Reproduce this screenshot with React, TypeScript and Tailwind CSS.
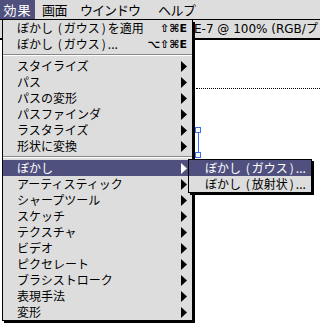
import React from 'react';

const jp = { fontFamily: '"Noto Sans CJK JP", "Noto Sans", sans-serif' };

function Arrow({ white }: { white?: boolean }) {
  return (
    <svg width="6" height="11" viewBox="0 0 6 11" className="shrink-0">
      <polygon points="0,0 6,5.5 0,11" fill={white ? '#fff' : '#000'} />
    </svg>
  );
}

// Osaka's half-width parentheses are wider than Noto's, so pad them a little
function Label({ text }: { text: string }) {
  const parts = text.split(/([()])/);
  return (
    <span className="whitespace-pre">
      {parts.map((p, i) =>
        p === '(' || p === ')' ? (
          <span key={i} className="px-[2px]">
            {p}
          </span>
        ) : (
          <React.Fragment key={i}>{p}</React.Fragment>
        )
      )}
    </span>
  );
}

function Row({ label, sub, active, shortcut }: { label: string; sub?: boolean; active?: boolean; shortcut?: string }) {
  return (
    <div
      className={`h-[16px] flex items-center justify-between pl-[14px] pr-[5px] text-[12px] leading-none ${
        active ? 'bg-[#50507f] text-white' : 'text-black'
      }`}
    >
      <Label text={label} />
      {sub && <Arrow white={active} />}
      {shortcut && (
        <span className="text-[11px] font-bold" style={{ fontFamily: '"DejaVu Sans", sans-serif' }}>
          {shortcut}
        </span>
      )}
    </div>
  );
}

function Sep() {
  return (
    <div className="h-[6px] flex flex-col justify-center">
      <div className="h-px bg-[#888]" />
      <div className="h-px bg-white" />
    </div>
  );
}

export default function App() {
  const group1 = ['スタイライズ', 'パス', 'パスの変形', 'パスファインダ', 'ラスタライズ', '形状に変換'];
  const group2 = ['アーティスティック', 'シャープツール', 'スケッチ', 'テクスチャ', 'ビデオ', 'ピクセレート', 'ブラシストローク', '表現手法', '変形'];

  return (
    <div className="relative w-[320px] h-[332px] overflow-hidden bg-white" style={jp}>
      {/* Menu bar */}
      <div className="h-[20px] flex items-center bg-[#dddddd] border-b border-black text-[13px] leading-none">
        <div className="h-full w-[35px] flex items-center justify-center bg-[#50507f] text-white tracking-[1px]">効果</div>
        <div className="ml-[7px] w-[38px] tracking-[-0.5px]">画面</div>
        <div className="w-[78px] tracking-[-1px]">ウインドウ</div>
        <div className="tracking-[-0.5px]">ヘルプ</div>
      </div>

      {/* Document window */}
      <div className="h-[20px] flex items-center bg-[#dddddd] border-b-2 border-black pl-[194px] text-[12px] leading-none whitespace-nowrap overflow-hidden">
        <span style={{ fontFamily: '"DejaVu Sans", "Noto Sans CJK JP", sans-serif' }}>E-7 @ 100% (RGB/プ</span>
      </div>
      <div className="mt-[48px] ml-[196px] border-t border-dotted border-black" />

      {/* selection handles */}
      <div className="absolute left-[195px] top-[127px] w-[6px] h-[6px] border border-[#3b6fe8] bg-white" />
      <div className="absolute left-[198px] top-[133px] w-px h-[20px] bg-[#3b6fe8]" />
      <div className="absolute left-[195px] top-[152px] w-[6px] h-[6px] border border-[#3b6fe8] bg-white" />

      {/* Effects menu */}
      <div className="absolute left-[2px] top-[20px] w-[191px] bg-[#dddddd] border border-t-0 border-black shadow-[2px_2px_0_#000]">
        <Row label="ぼかし (ガウス)を適用" shortcut="⇧⌘E" />
        <Row label="ぼかし (ガウス)..." shortcut="⌥⇧⌘E" />
        <Sep />
        {group1.map((l) => (
          <Row key={l} label={l} sub />
        ))}
        <Sep />
        <Row label="ぼかし" sub active />
        {group2.map((l) => (
          <Row key={l} label={l} sub />
        ))}
      </div>

      {/* Submenu */}
      <div className="absolute left-[188px] top-[159px] w-[124px] bg-[#dddddd] border border-black shadow-[2px_2px_0_#000]">
        <div className="h-[16px] flex items-center pl-[16px] text-[12px] leading-none bg-[#50507f] text-white">
          <Label text="ぼかし (ガウス)..." />
        </div>
        <div className="h-[16px] flex items-center pl-[16px] text-[12px] leading-none text-black">
          <Label text="ぼかし (放射状)..." />
        </div>
      </div>
    </div>
  );
}
